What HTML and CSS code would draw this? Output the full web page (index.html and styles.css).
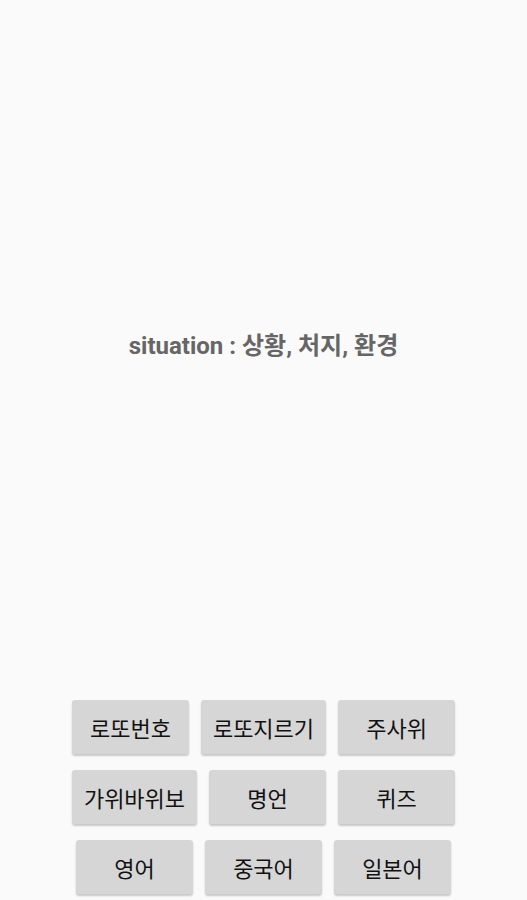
FILE: index.html
```html
<!DOCTYPE html>
<html lang="ko">
<head>
  <meta charset="UTF-8" />
  <meta name="viewport" content="width=device-width, initial-scale=1.0"/>
  <title>단어</title>
  <link rel="stylesheet" href="styles.css">
</head>
<body>

<div class="screen">
  <div class="word-area">
    <p class="word">situation : 상황, 처지, 환경</p>
  </div>

  <div class="menu">
    <div class="menu-row">
      <button class="menu-btn">로또번호</button>
      <button class="menu-btn">로또지르기</button>
      <button class="menu-btn">주사위</button>
    </div>
    <div class="menu-row">
      <button class="menu-btn">가위바위보</button>
      <button class="menu-btn">명언</button>
      <button class="menu-btn">퀴즈</button>
    </div>
    <div class="menu-row">
      <button class="menu-btn">영어</button>
      <button class="menu-btn">중국어</button>
      <button class="menu-btn">일본어</button>
    </div>
  </div>
</div>

</body>
</html>
```

FILE: styles.css
```css
body {
  margin: 0;
  background: #fafafa;
  font-family: Roboto, "Noto Sans CJK KR", sans-serif;
}
.screen {
  height: 900px;
  display: flex;
  flex-direction: column;
}
.word-area {
  flex: 1;
  display: flex;
  align-items: center;
  justify-content: center;
  padding-bottom: 14px;
}
.word {
  margin: 0;
  font-size: 24px;
  font-weight: bold;
  color: #666;
}
.menu {
  display: flex;
  flex-direction: column;
  gap: 16px;
  padding-bottom: 6px;
}
.menu-row {
  display: flex;
  justify-content: center;
  gap: 12px;
}
.menu-btn {
  min-width: 117px;
  height: 54px;
  padding: 0 12px;
  background: #d6d6d6;
  border: none;
  border-radius: 3px;
  box-shadow: 0 2px 2px rgba(0,0,0,0.2);
  font-family: Roboto, "Noto Sans CJK KR", sans-serif;
  font-size: 22px;
  color: #111;
}
```
